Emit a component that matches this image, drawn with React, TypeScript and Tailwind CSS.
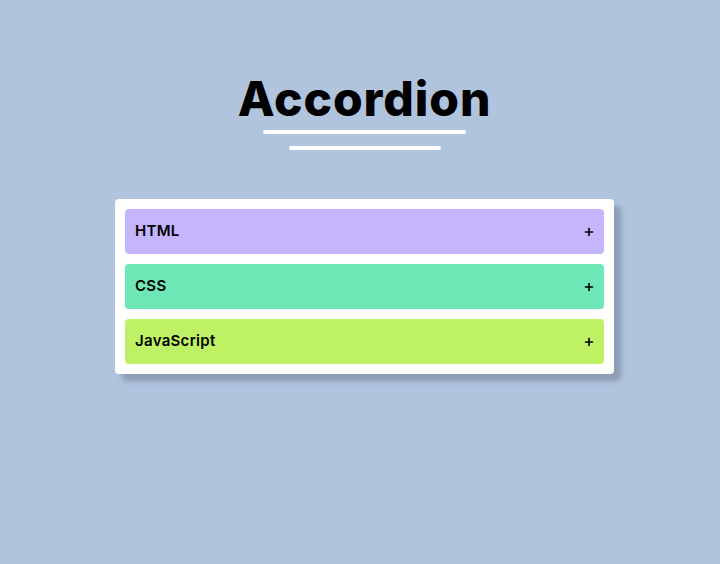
import { Plus } from 'lucide-react'

const items = [
  { label: 'HTML', color: 'bg-[#c4b5fd]' },
  { label: 'CSS', color: 'bg-[#6ee7b7]' },
  { label: 'JavaScript', color: 'bg-[#bef264]' },
]

export default function App() {
  return (
    <div className="min-h-[564px] bg-[#b0c4de] flex flex-col items-center pt-[70px] pl-[9px] font-['Inter',sans-serif] text-black">
      <h1 className="text-[48px] leading-[58px] font-extrabold tracking-[0.9px]">Accordion</h1>
      {/* double underline */}
      <div className="mt-[2px] w-[203px] h-[4px] rounded-full bg-white" />
      <div className="mt-[12px] w-[152px] h-[4px] rounded-full bg-white" />

      <div className="mt-[49px] w-[499px] bg-white rounded-[4px] p-[10px] flex flex-col gap-[10px] shadow-[7px_7px_5px_#8d9db4]">
        {items.map(({ label, color }) => (
          <button
            key={label}
            className={`${color} h-[45px] rounded-[4px] flex items-center justify-between pl-[10px] pr-[9px] text-[15px] font-semibold tracking-[0.3px]`}
          >
            <span>{label}</span>
            <Plus size={12} strokeWidth={3.2} />
          </button>
        ))}
      </div>
    </div>
  )
}
